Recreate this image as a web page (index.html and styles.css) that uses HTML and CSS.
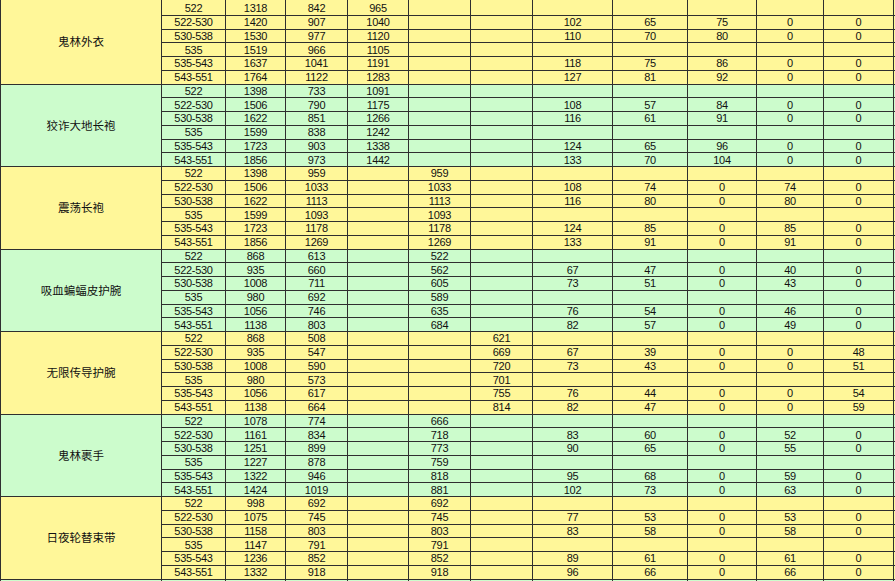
FILE: index.html
```html
<!DOCTYPE html>
<html lang="zh-CN">
<head>
<meta charset="utf-8">
<title>装备属性表</title>
<link rel="stylesheet" href="styles.css">
</head>
<body>
<div class="sheet">
  <div class="grp y">
    <div class="nm">鬼林外衣</div>
    <div class="r1">522</div><div class="r1">1318</div><div class="r1">842</div><div class="r1">965</div><div class="r1"></div><div class="r1"></div><div class="r1"></div><div class="r1"></div><div class="r1"></div><div class="r1"></div><div class="r1"></div><div class="r1"></div>
    <div>522-530</div><div>1420</div><div>907</div><div>1040</div><div></div><div></div><div>102</div><div>65</div><div>75</div><div>0</div><div>0</div><div></div>
    <div>530-538</div><div>1530</div><div>977</div><div>1120</div><div></div><div></div><div>110</div><div>70</div><div>80</div><div>0</div><div>0</div><div></div>
    <div>535</div><div>1519</div><div>966</div><div>1105</div><div></div><div></div><div></div><div></div><div></div><div></div><div></div><div></div>
    <div>535-543</div><div>1637</div><div>1041</div><div>1191</div><div></div><div></div><div>118</div><div>75</div><div>86</div><div>0</div><div>0</div><div></div>
    <div>543-551</div><div>1764</div><div>1122</div><div>1283</div><div></div><div></div><div>127</div><div>81</div><div>92</div><div>0</div><div>0</div><div></div>
  </div>
  <div class="grp g">
    <div class="nm">狡诈大地长袍</div>
    <div>522</div><div>1398</div><div>733</div><div>1091</div><div></div><div></div><div></div><div></div><div></div><div></div><div></div><div></div>
    <div>522-530</div><div>1506</div><div>790</div><div>1175</div><div></div><div></div><div>108</div><div>57</div><div>84</div><div>0</div><div>0</div><div></div>
    <div>530-538</div><div>1622</div><div>851</div><div>1266</div><div></div><div></div><div>116</div><div>61</div><div>91</div><div>0</div><div>0</div><div></div>
    <div>535</div><div>1599</div><div>838</div><div>1242</div><div></div><div></div><div></div><div></div><div></div><div></div><div></div><div></div>
    <div>535-543</div><div>1723</div><div>903</div><div>1338</div><div></div><div></div><div>124</div><div>65</div><div>96</div><div>0</div><div>0</div><div></div>
    <div>543-551</div><div>1856</div><div>973</div><div>1442</div><div></div><div></div><div>133</div><div>70</div><div>104</div><div>0</div><div>0</div><div></div>
  </div>
  <div class="grp y">
    <div class="nm">震荡长袍</div>
    <div>522</div><div>1398</div><div>959</div><div></div><div>959</div><div></div><div></div><div></div><div></div><div></div><div></div><div></div>
    <div>522-530</div><div>1506</div><div>1033</div><div></div><div>1033</div><div></div><div>108</div><div>74</div><div>0</div><div>74</div><div>0</div><div></div>
    <div>530-538</div><div>1622</div><div>1113</div><div></div><div>1113</div><div></div><div>116</div><div>80</div><div>0</div><div>80</div><div>0</div><div></div>
    <div>535</div><div>1599</div><div>1093</div><div></div><div>1093</div><div></div><div></div><div></div><div></div><div></div><div></div><div></div>
    <div>535-543</div><div>1723</div><div>1178</div><div></div><div>1178</div><div></div><div>124</div><div>85</div><div>0</div><div>85</div><div>0</div><div></div>
    <div>543-551</div><div>1856</div><div>1269</div><div></div><div>1269</div><div></div><div>133</div><div>91</div><div>0</div><div>91</div><div>0</div><div></div>
  </div>
  <div class="grp g">
    <div class="nm">吸血蝙蝠皮护腕</div>
    <div>522</div><div>868</div><div>613</div><div></div><div>522</div><div></div><div></div><div></div><div></div><div></div><div></div><div></div>
    <div>522-530</div><div>935</div><div>660</div><div></div><div>562</div><div></div><div>67</div><div>47</div><div>0</div><div>40</div><div>0</div><div></div>
    <div>530-538</div><div>1008</div><div>711</div><div></div><div>605</div><div></div><div>73</div><div>51</div><div>0</div><div>43</div><div>0</div><div></div>
    <div>535</div><div>980</div><div>692</div><div></div><div>589</div><div></div><div></div><div></div><div></div><div></div><div></div><div></div>
    <div>535-543</div><div>1056</div><div>746</div><div></div><div>635</div><div></div><div>76</div><div>54</div><div>0</div><div>46</div><div>0</div><div></div>
    <div>543-551</div><div>1138</div><div>803</div><div></div><div>684</div><div></div><div>82</div><div>57</div><div>0</div><div>49</div><div>0</div><div></div>
  </div>
  <div class="grp y">
    <div class="nm">无限传导护腕</div>
    <div>522</div><div>868</div><div>508</div><div></div><div></div><div>621</div><div></div><div></div><div></div><div></div><div></div><div></div>
    <div>522-530</div><div>935</div><div>547</div><div></div><div></div><div>669</div><div>67</div><div>39</div><div>0</div><div>0</div><div>48</div><div></div>
    <div>530-538</div><div>1008</div><div>590</div><div></div><div></div><div>720</div><div>73</div><div>43</div><div>0</div><div>0</div><div>51</div><div></div>
    <div>535</div><div>980</div><div>573</div><div></div><div></div><div>701</div><div></div><div></div><div></div><div></div><div></div><div></div>
    <div>535-543</div><div>1056</div><div>617</div><div></div><div></div><div>755</div><div>76</div><div>44</div><div>0</div><div>0</div><div>54</div><div></div>
    <div>543-551</div><div>1138</div><div>664</div><div></div><div></div><div>814</div><div>82</div><div>47</div><div>0</div><div>0</div><div>59</div><div></div>
  </div>
  <div class="grp g">
    <div class="nm">鬼林裹手</div>
    <div>522</div><div>1078</div><div>774</div><div></div><div>666</div><div></div><div></div><div></div><div></div><div></div><div></div><div></div>
    <div>522-530</div><div>1161</div><div>834</div><div></div><div>718</div><div></div><div>83</div><div>60</div><div>0</div><div>52</div><div>0</div><div></div>
    <div>530-538</div><div>1251</div><div>899</div><div></div><div>773</div><div></div><div>90</div><div>65</div><div>0</div><div>55</div><div>0</div><div></div>
    <div>535</div><div>1227</div><div>878</div><div></div><div>759</div><div></div><div></div><div></div><div></div><div></div><div></div><div></div>
    <div>535-543</div><div>1322</div><div>946</div><div></div><div>818</div><div></div><div>95</div><div>68</div><div>0</div><div>59</div><div>0</div><div></div>
    <div>543-551</div><div>1424</div><div>1019</div><div></div><div>881</div><div></div><div>102</div><div>73</div><div>0</div><div>63</div><div>0</div><div></div>
  </div>
  <div class="grp y">
    <div class="nm">日夜轮替束带</div>
    <div>522</div><div>998</div><div>692</div><div></div><div>692</div><div></div><div></div><div></div><div></div><div></div><div></div><div></div>
    <div>522-530</div><div>1075</div><div>745</div><div></div><div>745</div><div></div><div>77</div><div>53</div><div>0</div><div>53</div><div>0</div><div></div>
    <div>530-538</div><div>1158</div><div>803</div><div></div><div>803</div><div></div><div>83</div><div>58</div><div>0</div><div>58</div><div>0</div><div></div>
    <div>535</div><div>1147</div><div>791</div><div></div><div>791</div><div></div><div></div><div></div><div></div><div></div><div></div><div></div>
    <div>535-543</div><div>1236</div><div>852</div><div></div><div>852</div><div></div><div>89</div><div>61</div><div>0</div><div>61</div><div>0</div><div></div>
    <div>543-551</div><div>1332</div><div>918</div><div></div><div>918</div><div></div><div>96</div><div>66</div><div>0</div><div>66</div><div>0</div><div></div>
  </div>
  <div class="grp g">
    <div class="nm"></div>
    <div></div><div></div><div></div><div></div><div></div><div></div><div></div><div></div><div></div><div></div><div></div><div></div>
  </div>
</div>
</body>
</html>
```

FILE: styles.css
```css
html, body {
  margin: 0;
  padding: 0;
  height: 581px;
  overflow: hidden;
  background: #ffffff;
}

.sheet {
  display: grid;
  grid-template-columns: 160px 63px 59px 61px 60px 61px 61px 79px 74px 68px 66px 69px 40px;
  grid-template-rows: 14.75px;
  grid-auto-rows: 12.75px;
  gap: 1px;
  padding: 0 0 0 1px;
  width: max-content;
  background: #2f2f2f;
  font-family: "Liberation Sans", Arial, sans-serif;
  font-size: 11px;
  color: #111111;
}

.grp {
  display: contents;
}

.grp > div {
  display: flex;
  align-items: center;
  justify-content: center;
  line-height: 1;
  padding-top: 1px;
  letter-spacing: -0.3px;
  white-space: nowrap;
  overflow: hidden;
}

.grp > div.r1 {
  padding-top: 3px;
}

.y > div {
  background: #fff799;
}

.g > div {
  background: #ccfccc;
}

.grp > .nm {
  grid-column: 1;
  grid-row: span 6;
  padding-top: 0;
  font-family: "Noto Sans CJK SC", "Liberation Sans", sans-serif;
  font-size: 11.5px;
  letter-spacing: 0;
}
```
